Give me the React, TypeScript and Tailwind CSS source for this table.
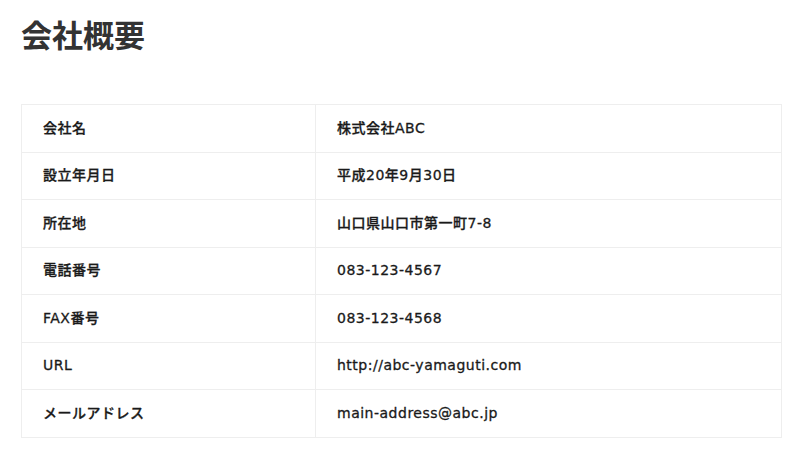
const rows: [string, string][] = [
  ['会社名', '株式会社ABC'],
  ['設立年月日', '平成20年9月30日'],
  ['所在地', '山口県山口市第一町7-8'],
  ['電話番号', '083-123-4567'],
  ['FAX番号', '083-123-4568'],
  ['URL', 'http://abc-yamaguti.com'],
  ['メールアドレス', 'main-address@abc.jp'],
];

export default function App() {
  return (
    <div className="min-h-[455px] w-[800px] bg-white px-[21px] pt-[14px] text-[#1a1a1a] font-['DejaVu_Sans','Noto_Sans_CJK_JP',sans-serif]">
      <h1 className="text-[31px] leading-[40px] font-bold text-[#333] font-['Noto_Sans_CJK_JP',sans-serif]">
        会社概要
      </h1>
      <table className="mt-[50px] w-[761px] border-collapse border border-[#eeeeee] text-[14px] tracking-[0.5px] [-webkit-text-stroke:0.3px_#1a1a1a]">
        <tbody>
          {rows.map(([label, value]) => (
            <tr key={label} className="h-[47.5px] border-b border-[#eeeeee]">
              <td className="w-[294px] border-r border-[#eeeeee] px-[21px] align-middle font-medium">
                {label}
              </td>
              <td className="px-[21px] align-middle font-medium">{value}</td>
            </tr>
          ))}
        </tbody>
      </table>
    </div>
  );
}
